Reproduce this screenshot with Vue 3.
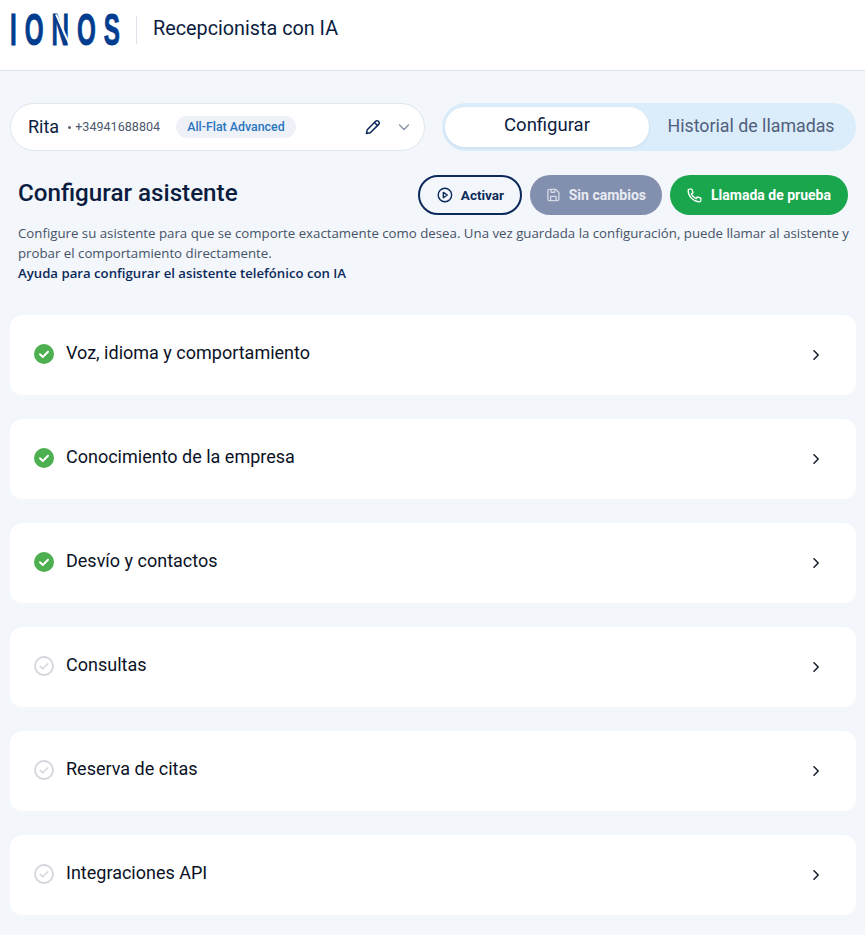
<template>
  <div class="page">
    <header class="topbar">
      <div class="logo"><span class="logo-text">IONOS</span><i class="slit"></i></div>
      <div class="divider"></div>
      <div class="app-name">Recepcionista con IA</div>
    </header>

    <main class="main">
      <div class="top-row">
        <div class="selector">
          <span class="name">Rita</span>
          <span class="dot"></span>
          <span class="phone">+34941688804</span>
          <span class="plan">All-Flat Advanced</span>
          <svg class="pencil" width="18" height="18" viewBox="0 0 18 18" fill="none" stroke="#0b2a5b" stroke-width="1.5" stroke-linejoin="round" stroke-linecap="round">
            <path d="M2.4 15.6l.9-3.9 8.3-8.4a2 2 0 0 1 2.9 0l.2.2a2 2 0 0 1 0 2.9l-8.4 8.3z" />
            <path d="M10.5 4.5l3 3" />
          </svg>
          <svg class="caret" width="14" height="14" viewBox="0 0 14 14" fill="none" stroke="#8a94a6" stroke-width="1.4" stroke-linecap="round" stroke-linejoin="round">
            <path d="M2.5 5l4.5 4.5L11.5 5" />
          </svg>
        </div>

        <div class="tabs">
          <div class="tab active">Configurar</div>
          <div class="tab">Historial de llamadas</div>
        </div>
      </div>

      <div class="heading-row">
        <h1>Configurar asistente</h1>
        <div class="actions">
          <button class="btn outline">
            <svg width="16" height="16" viewBox="0 0 16 16" fill="none" stroke="#0b2a5b" stroke-width="1.4" stroke-linejoin="round">
              <circle cx="8" cy="8" r="6.8" />
              <path d="M6.4 5.3l4 2.7-4 2.7z" />
            </svg>
            Activar
          </button>
          <button class="btn muted">
            <svg width="16" height="16" viewBox="0 0 16 16" fill="none" stroke="#d5dae6" stroke-width="1.4" stroke-linejoin="round">
              <path d="M2 3.5A1.5 1.5 0 0 1 3.5 2h7.2L14 5.3v7.2a1.5 1.5 0 0 1-1.5 1.5h-9A1.5 1.5 0 0 1 2 12.500z" />
              <path d="M5 14V9.500h6V14M5.500 2v3h4V2" />
            </svg>
            Sin cambios
          </button>
          <button class="btn green">
            <svg width="17" height="17" viewBox="0 0 24 24" fill="none" stroke="#fff" stroke-width="1.8" stroke-linecap="round" stroke-linejoin="round">
              <path d="M5 3h3.200l1.800 5-2.400 1.700a13 13 0 0 0 6.700 6.700L16 14l5 1.800V19a2 2 0 0 1-2 2C10.700 21 3 13.300 3 5a2 2 0 0 1 2-2z" />
            </svg>
            Llamada de prueba
          </button>
        </div>
      </div>

      <p class="desc">
        Configure su asistente para que se comporte exactamente como desea. Una vez guardada la configuración, puede llamar al asistente y probar el comportamiento directamente.
        <a class="help">Ayuda para configurar el asistente telefónico con IA</a>
      </p>

      <div class="sections">
        <div v-for="item in sections" :key="item.title" class="card">
          <svg v-if="item.done" class="status" width="20" height="20" viewBox="0 0 20 20">
            <circle cx="10" cy="10" r="10" fill="#4caf50" />
            <path d="M6 10.300l2.800 2.700L14 7.800" fill="none" stroke="#fff" stroke-width="2" stroke-linecap="round" stroke-linejoin="round" />
          </svg>
          <svg v-else class="status" width="20" height="20" viewBox="0 0 20 20">
            <circle cx="10" cy="10" r="9" fill="none" stroke="#d3d6dc" stroke-width="1.800" />
            <path d="M6.200 10.300l2.600 2.500L13.800 7.800" fill="none" stroke="#d3d6dc" stroke-width="1.500" stroke-linecap="round" stroke-linejoin="round" />
          </svg>
          <span class="title">{{ item.title }}</span>
          <svg class="chevron" width="12" height="12" viewBox="0 0 12 12" fill="none" stroke="#1a2233" stroke-width="1.600" stroke-linecap="round" stroke-linejoin="round">
            <path d="M4 1.800L8.200 6 4 10.200" />
          </svg>
        </div>
      </div>
    </main>
  </div>
</template>

<script setup>
// lista de secciones del asistente
const sections = [
  { title: 'Voz, idioma y comportamiento', done: true },
  { title: 'Conocimiento de la empresa', done: true },
  { title: 'Desvío y contactos', done: true },
  { title: 'Consultas', done: false },
  { title: 'Reserva de citas', done: false },
  { title: 'Integraciones API', done: false }
];
</script>

<style>
html, body {
  margin: 0;
  background: #f3f6fa;
}
</style>

<style scoped>
.page {
  min-height: 935px;
  background: #f3f6fa;
  font-family: Roboto, "Liberation Sans", sans-serif;
  color: #0b1c3f;
  overflow: hidden;
}

.topbar {
  display: flex;
  align-items: center;
  height: 60px;
  background: #fff;
  border-bottom: 1px solid #dfe4ec;
  padding-left: 10px;
  padding-bottom: 10px;
}

.logo {
  position: relative;
  width: 110px;
  height: 40px;
}

.logo-text {
  display: block;
  font-family: "Liberation Sans", sans-serif;
  font-weight: 700;
  font-size: 44px;
  line-height: 40px;
  letter-spacing: 14.5px;
  color: #003d8f;
  -webkit-text-stroke: 1px #003d8f;
  transform: scaleX(0.55);
  transform-origin: left center;
  white-space: nowrap;
}

/* corte blanco de la N */
.slit {
  position: absolute;
  left: 52px;
  top: 3px;
  width: 1.5px;
  height: 34px;
  background: #fff;
  transform: rotate(-24deg);
}

.divider {
  width: 1px;
  height: 28px;
  background: #dfe4ec;
  margin-left: 16px;
}

.app-name {
  margin-left: 16px;
  margin-top: -4px;
  font-size: 19.800px;
  color: #0b1c3f;
}

.main {
  padding: 0 9px 20px 10px;
}

.top-row {
  display: flex;
  justify-content: space-between;
  margin-top: 32px;
}

.selector {
  display: flex;
  align-items: center;
  box-sizing: border-box;
  width: 415px;
  height: 48px;
  padding: 0 13px 0 17px;
  background: #fff;
  border: 1px solid #e1e6ee;
  border-radius: 24px;
}

.name {
  font-size: 18px;
  color: #0b1c3f;
  margin-top: -2px;
}

.dot {
  width: 3px;
  height: 3px;
  border-radius: 50%;
  background: #5b6577;
  margin-left: 9px;
  margin-right: 4px;
}

.phone {
  margin-top: -1px;
  font-size: 12.600px;
  color: #4e5a6e;
}

.plan {
  margin-left: 16px;
  padding: 0 11px;
  height: 22px;
  line-height: 21px;
  font-size: 12.400px;
  font-weight: 500;
  color: #2a75bf;
  background: #eef2f8;
  border-radius: 11px;
}

.pencil {
  margin-left: auto;
}

.caret {
  margin-left: 15px;
}

.tabs {
  display: flex;
  box-sizing: border-box;
  width: 414px;
  height: 48px;
  padding: 4px 3px;
  background: #dbecfa;
  border-radius: 24px;
}

.tab {
  flex: 1;
  display: flex;
  align-items: center;
  justify-content: center;
  padding-bottom: 4px;
  font-size: 17.800px;
  color: #50607c;
  border-radius: 20px;
}

.tab.active {
  flex: 0 0 204px;
  font-size: 18.500px;
  background: #fff;
  color: #0b1c3f;
  box-shadow: 0 1px 3px rgba(11, 42, 91, 0.08);
}

.heading-row {
  display: flex;
  align-items: center;
  justify-content: space-between;
  margin-top: 24px;
  padding: 0 8px;
}

h1 {
  margin: -4px 0 0;
  font-size: 24.200px;
  font-weight: 500;
  color: #0b1c3f;
}

.actions {
  display: flex;
  gap: 8px;
}

.btn {
  display: flex;
  align-items: center;
  gap: 8px;
  box-sizing: border-box;
  height: 40px;
  border-radius: 20px;
  border: none;
  font-family: inherit;
  font-size: 14px;
  font-weight: 700;
  padding: 0 16px;
  white-space: nowrap;
}

.btn.outline {
  width: 104px;
  padding: 0 16px 0 17px;
  font-size: 13.500px;
  background: transparent;
  border: 2px solid #0b2a5b;
  color: #0b2a5b;
}

.btn.muted {
  width: 132px;
  background: #838fae;
  color: #e8ebf2;
}

.btn.green {
  width: 178px;
  background: #19a64d;
  color: #fff;
}

.desc {
  margin: 8px 0 0;
  padding: 0 3px 0 8px;
  font-family: "Open Sans", sans-serif;
  font-size: 13.250px;
  line-height: 20px;
  color: #465368;
}

.help {
  display: block;
  font-size: 13.200px;
  font-weight: 600;
  color: #0b2a5b;
}

.sections {
  display: flex;
  flex-direction: column;
  gap: 24px;
  margin-top: 32px;
}

.card {
  display: flex;
  align-items: center;
  height: 80px;
  padding: 0 34px 0 24px;
  background: #fff;
  border-radius: 12px;
}

.status {
  margin-top: -2px;
}

.title {
  margin-left: 12px;
  margin-top: -6px;
  font-size: 18px;
  color: #0b1226;
}

.chevron {
  margin-left: auto;
}
</style>
